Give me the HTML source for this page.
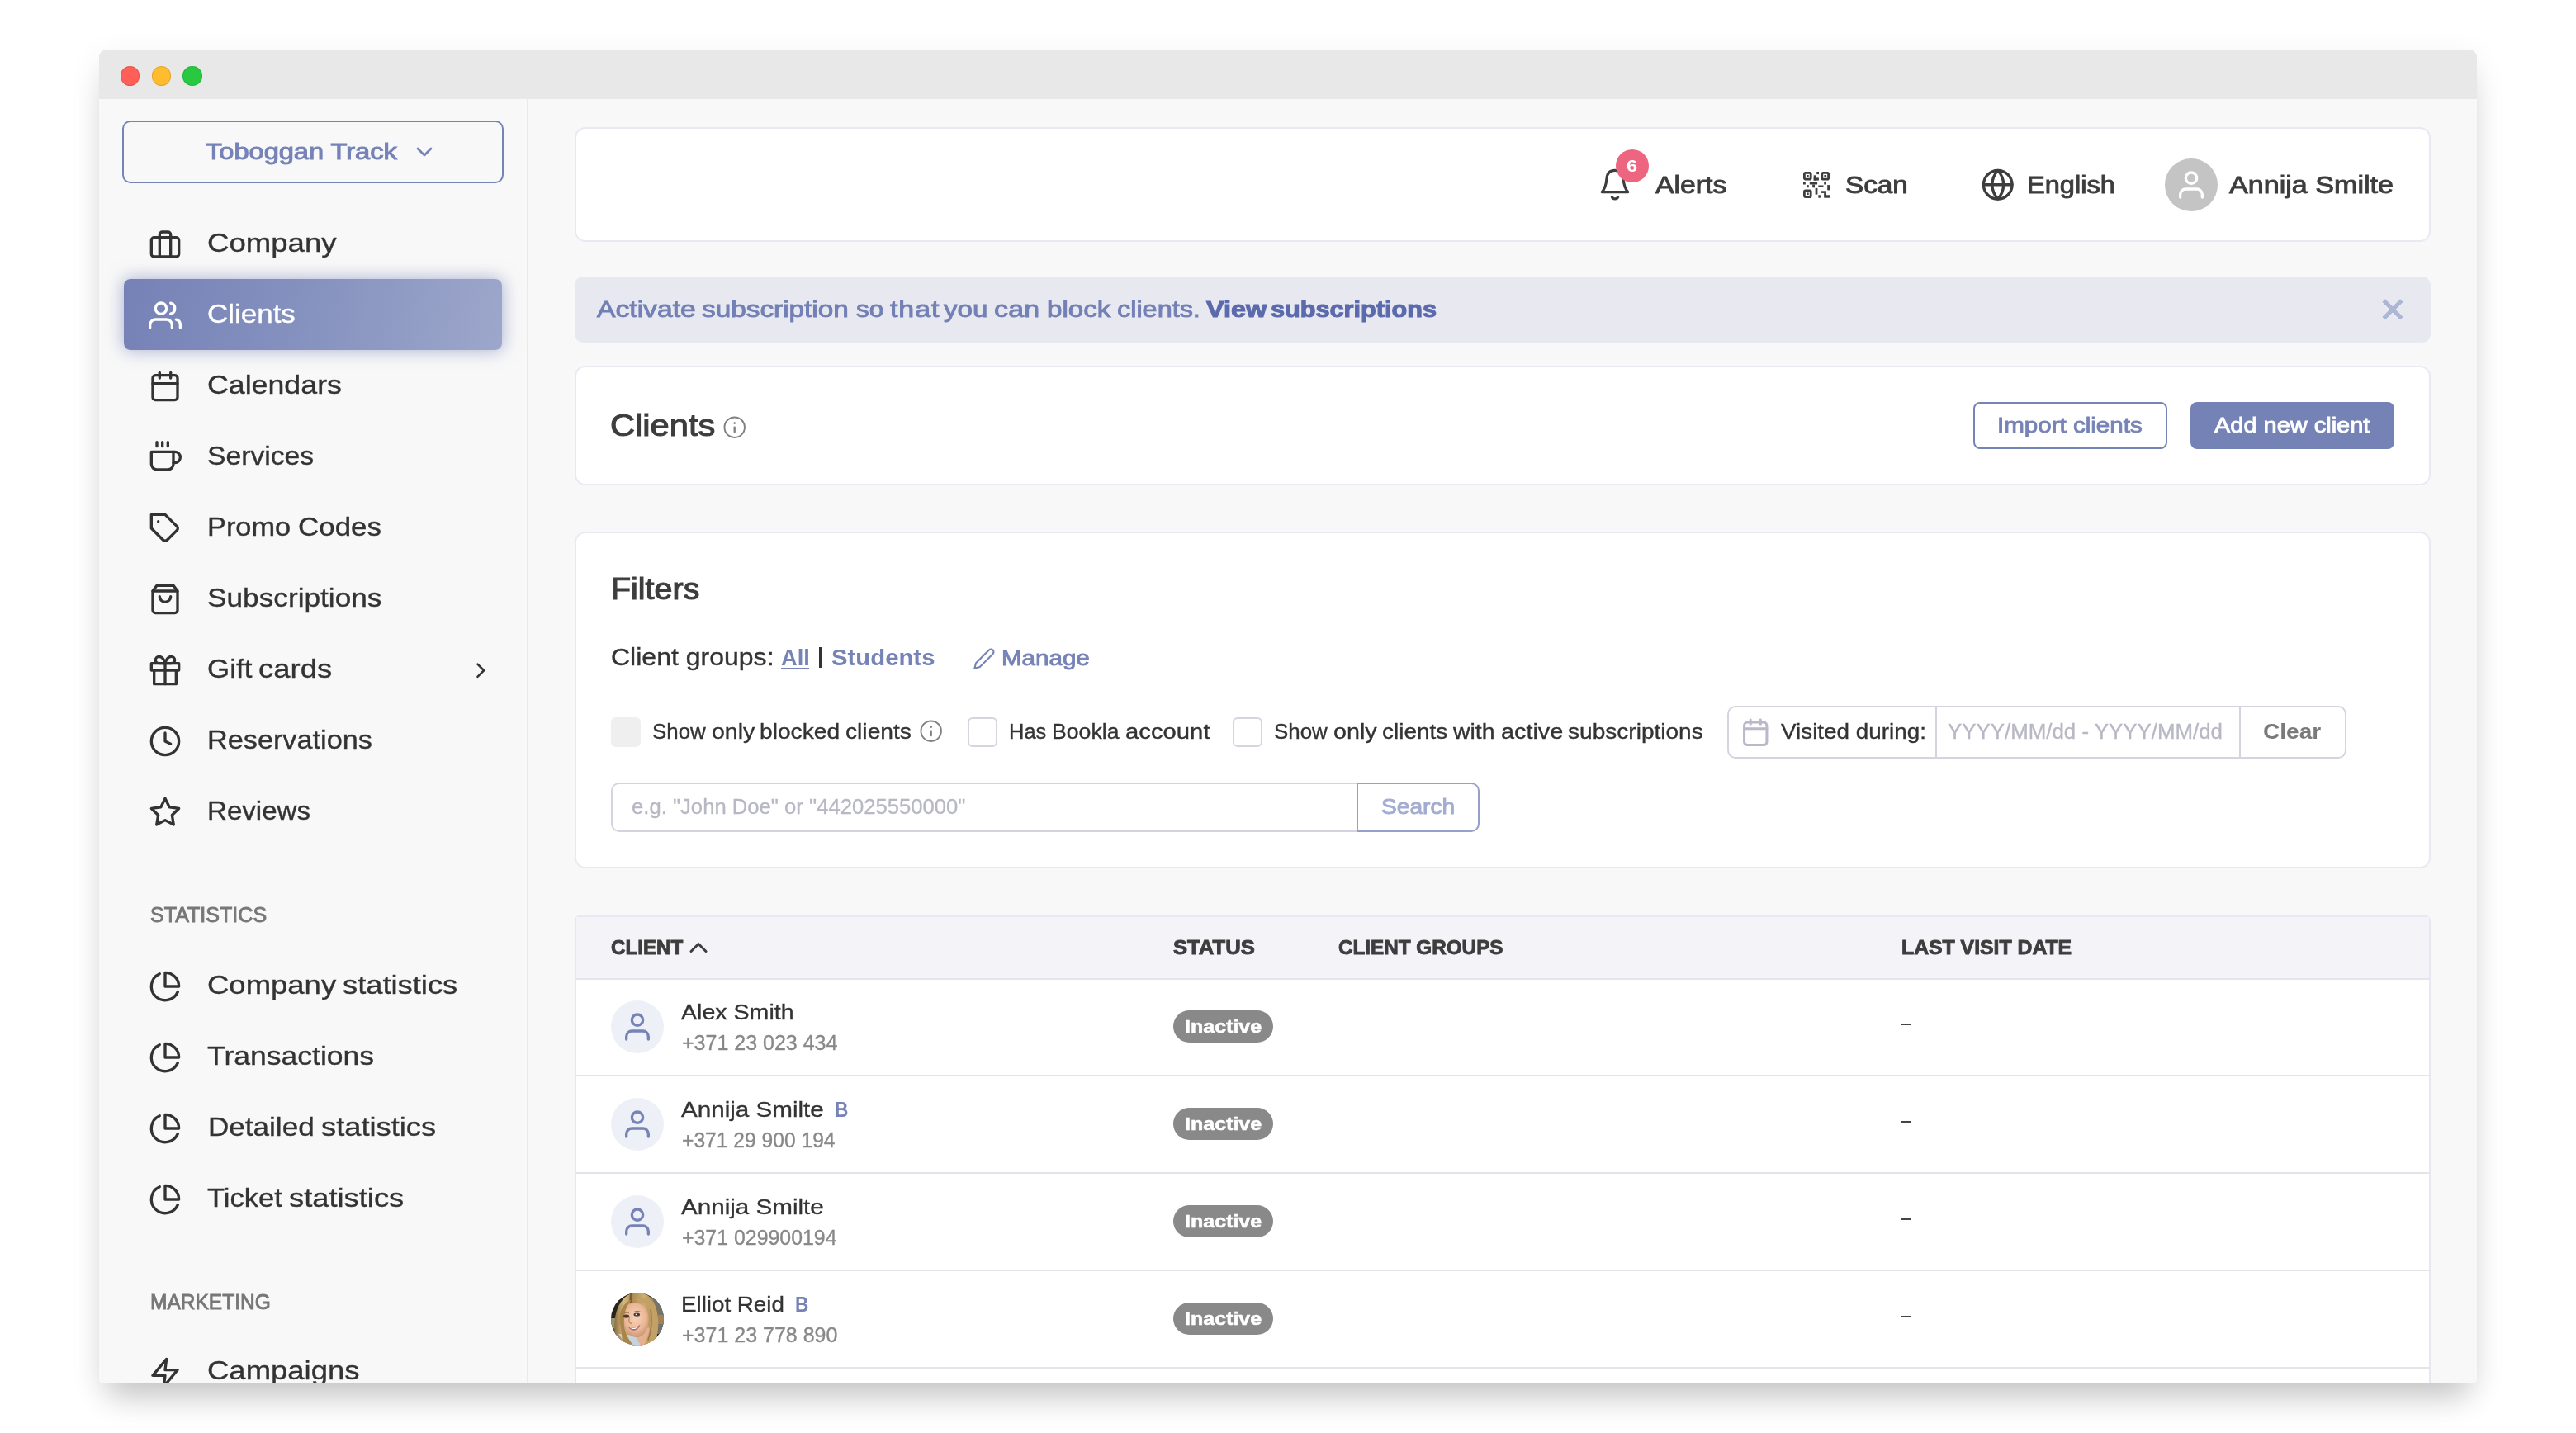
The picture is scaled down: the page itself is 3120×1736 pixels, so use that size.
<!DOCTYPE html>
<html lang="en">
<head>
<meta charset="utf-8">
<title>Clients</title>
<style>
*{box-sizing:border-box;margin:0;padding:0}
html,body{width:3120px;height:1736px;overflow:hidden;background:#fff}
body{font-family:"Liberation Sans",sans-serif;color:#333;position:relative}
svg{display:block;overflow:visible}
.ic{fill:none;stroke:currentColor;stroke-width:2;stroke-linecap:round;stroke-linejoin:round}
.abs{position:absolute}
.t{position:absolute;white-space:pre;line-height:1;transform-origin:0 0}
#shadow{position:absolute;left:120px;top:60px;width:2880px;height:1616px;border-radius:9px 9px 6px 6px;box-shadow:0 28px 36px -12px rgba(0,0,0,.19),0 10px 40px rgba(0,0,0,.07)}
#win{position:absolute;left:120px;top:60px;width:2880px;height:1616px;border-radius:9px 9px 6px 6px;background:#f8f8f8;overflow:hidden;will-change:transform}
</style>
</head>
<body>
<div id="shadow"></div>
<div id="win">
<div class="abs " style="left:0px;top:0px;width:2880px;height:60px;background:#e8e8e8"></div>
<div class="abs " style="left:25.8px;top:20.1px;width:23.6px;height:23.6px;background:#ff5f57;border-radius:50%;box-shadow:inset 0 0 0 1px rgba(0,0,0,.1)"></div>
<div class="abs " style="left:63.6px;top:20.1px;width:23.6px;height:23.6px;background:#febc2e;border-radius:50%;box-shadow:inset 0 0 0 1px rgba(0,0,0,.1)"></div>
<div class="abs " style="left:101.2px;top:20.1px;width:23.6px;height:23.6px;background:#28c840;border-radius:50%;box-shadow:inset 0 0 0 1px rgba(0,0,0,.1)"></div>
<div class="abs " style="left:518px;top:60px;width:2px;height:1556px;background:#e9e9f3"></div>
<div class="abs " style="left:28px;top:86px;width:462px;height:76px;border:2px solid #7683b7;border-radius:10px"></div>
<span class="t" style="left:129.4px;top:110.0px;font-size:27.5px;color:#7683b7;transform:scaleX(1.1844);-webkit-text-stroke:1.05px;">Toboggan Track</span>
<svg class="ic abs" viewBox="0 0 24 24" style="left:378px;top:108px;width:32px;height:32px;color:#7683b7;stroke-width:2;"><polyline points="6 9 12 15 18 9"/></svg>
<svg class="ic abs" viewBox="0 0 24 24" style="left:60px;top:216.1px;width:40px;height:40px;color:#333;stroke-width:2;"><rect x="2" y="7" width="20" height="14" rx="2" ry="2"/><path d="M16 21V5a2 2 0 0 0-2-2h-4a2 2 0 0 0-2 2v16"/></svg>
<span class="t" style="left:130.7px;top:217.6px;font-size:32px;color:#333;-webkit-text-stroke:.35px;transform:scaleX(1.1432);">Company</span>
<div class="abs " style="left:30px;top:278px;width:458px;height:86px;border-radius:8px;background:linear-gradient(100deg,#7682b6 0%,#8490be 45%,#9da7cb 100%);box-shadow:0 0 20px 1px rgba(105,120,180,.55)"></div>
<svg class="ic abs" viewBox="0 0 24 24" style="left:60px;top:302.1px;width:40px;height:40px;color:#fff;stroke-width:2;"><path d="M17 21v-2a4 4 0 0 0-4-4H5a4 4 0 0 0-4 4v2"/><circle cx="9" cy="7" r="4"/><path d="M23 21v-2a4 4 0 0 0-3-3.87"/><path d="M16 3.13a4 4 0 0 1 0 7.75"/></svg>
<span class="t" style="left:130.8px;top:303.6px;font-size:32px;color:#fff;-webkit-text-stroke:.35px;transform:scaleX(1.0924);">Clients</span>
<svg class="ic abs" viewBox="0 0 24 24" style="left:60px;top:388.1px;width:40px;height:40px;color:#333;stroke-width:2;"><rect x="3" y="4" width="18" height="18" rx="2" ry="2"/><line x1="16" y1="2" x2="16" y2="6"/><line x1="8" y1="2" x2="8" y2="6"/><line x1="3" y1="10" x2="21" y2="10"/></svg>
<span class="t" style="left:130.7px;top:389.6px;font-size:32px;color:#333;-webkit-text-stroke:.35px;transform:scaleX(1.1168);">Calendars</span>
<svg class="ic abs" viewBox="0 0 24 24" style="left:60px;top:474.1px;width:40px;height:40px;color:#333;stroke-width:2;"><path d="M18 8h1a4 4 0 0 1 0 8h-1"/><path d="M2 8h16v9a4 4 0 0 1-4 4H6a4 4 0 0 1-4-4V8z"/><line x1="6" y1="1" x2="6" y2="4"/><line x1="10" y1="1" x2="10" y2="4"/><line x1="14" y1="1" x2="14" y2="4"/></svg>
<span class="t" style="left:130.8px;top:475.6px;font-size:32px;color:#333;-webkit-text-stroke:.35px;transform:scaleX(1.0526);">Services</span>
<svg class="ic abs" viewBox="0 0 24 24" style="left:60px;top:560.1px;width:40px;height:40px;color:#333;stroke-width:2;"><path d="M20.59 13.41l-7.17 7.17a2 2 0 0 1-2.83 0L2 12V2h10l8.59 8.59a2 2 0 0 1 0 2.82z"/><line x1="7" y1="7" x2="7.01" y2="7"/></svg>
<span class="t" style="left:131.4px;top:561.6px;font-size:32px;color:#333;-webkit-text-stroke:.35px;transform:scaleX(1.0738);">Promo</span>
<span class="t" style="left:241.0px;top:561.6px;font-size:32px;color:#333;-webkit-text-stroke:.35px;transform:scaleX(1.0913);">Codes</span>
<svg class="ic abs" viewBox="0 0 24 24" style="left:60px;top:646.1px;width:40px;height:40px;color:#333;stroke-width:2;"><path d="M6 2L3 6v14a2 2 0 0 0 2 2h14a2 2 0 0 0 2-2V6l-3-4z"/><line x1="3" y1="6" x2="21" y2="6"/><path d="M16 10a4 4 0 0 1-8 0"/></svg>
<span class="t" style="left:130.8px;top:647.6px;font-size:32px;color:#333;-webkit-text-stroke:.35px;transform:scaleX(1.1008);">Subscriptions</span>
<svg class="ic abs" viewBox="0 0 24 24" style="left:60px;top:732.1px;width:40px;height:40px;color:#333;stroke-width:2;"><polyline points="20 12 20 22 4 22 4 12"/><rect x="2" y="7" width="20" height="5"/><line x1="12" y1="22" x2="12" y2="7"/><path d="M12 7H7.5a2.5 2.5 0 0 1 0-5C11 2 12 7 12 7z"/><path d="M12 7h4.5a2.5 2.5 0 0 0 0-5C13 2 12 7 12 7z"/></svg>
<span class="t" style="left:130.5px;top:733.6px;font-size:32px;color:#333;-webkit-text-stroke:.35px;transform:scaleX(1.0917);">Gift</span>
<span class="t" style="left:193.2px;top:733.6px;font-size:32px;color:#333;-webkit-text-stroke:.35px;transform:scaleX(1.1393);">cards</span>
<svg class="ic abs" viewBox="0 0 24 24" style="left:447.4px;top:736.6px;width:30.5px;height:30.5px;color:#333;stroke-width:2;"><polyline points="9 18 15 12 9 6"/></svg>
<svg class="ic abs" viewBox="0 0 24 24" style="left:60px;top:818.1px;width:40px;height:40px;color:#333;stroke-width:2;"><circle cx="12" cy="12" r="10"/><polyline points="12 6 12 12 16 14"/></svg>
<span class="t" style="left:130.8px;top:819.6px;font-size:32px;color:#333;-webkit-text-stroke:.35px;transform:scaleX(1.0704);">Reservations</span>
<svg class="ic abs" viewBox="0 0 24 24" style="left:60px;top:904.1px;width:40px;height:40px;color:#333;stroke-width:2;"><polygon points="12 2 15.09 8.26 22 9.27 17 14.14 18.18 21.02 12 17.77 5.82 21.02 7 14.14 2 9.27 8.91 8.26 12 2"/></svg>
<span class="t" style="left:130.8px;top:905.6px;font-size:32px;color:#333;-webkit-text-stroke:.35px;transform:scaleX(1.0339);">Reviews</span>
<svg class="ic abs" viewBox="0 0 24 24" style="left:60px;top:1115.1px;width:40px;height:40px;color:#333;stroke-width:2;"><path d="M21.21 15.89A10 10 0 1 1 8 2.83"/><path d="M22 12A10 10 0 0 0 12 2v10z"/></svg>
<span class="t" style="left:130.7px;top:1116.5px;font-size:32px;color:#333;-webkit-text-stroke:.35px;transform:scaleX(1.1402);">Company</span>
<span class="t" style="left:295.1px;top:1116.5px;font-size:32px;color:#333;-webkit-text-stroke:.35px;transform:scaleX(1.1349);">statistics</span>
<svg class="ic abs" viewBox="0 0 24 24" style="left:60px;top:1201.1px;width:40px;height:40px;color:#333;stroke-width:2;"><path d="M21.21 15.89A10 10 0 1 1 8 2.83"/><path d="M22 12A10 10 0 0 0 12 2v10z"/></svg>
<span class="t" style="left:130.8px;top:1202.5px;font-size:32px;color:#333;-webkit-text-stroke:.35px;transform:scaleX(1.1104);">Transactions</span>
<svg class="ic abs" viewBox="0 0 24 24" style="left:60px;top:1287.1px;width:40px;height:40px;color:#333;stroke-width:2;"><path d="M21.21 15.89A10 10 0 1 1 8 2.83"/><path d="M22 12A10 10 0 0 0 12 2v10z"/></svg>
<span class="t" style="left:131.7px;top:1288.5px;font-size:32px;color:#333;-webkit-text-stroke:.35px;transform:scaleX(1.0958);">Detailed</span>
<span class="t" style="left:269.4px;top:1288.5px;font-size:32px;color:#333;-webkit-text-stroke:.35px;transform:scaleX(1.1333);">statistics</span>
<svg class="ic abs" viewBox="0 0 24 24" style="left:60px;top:1373.1px;width:40px;height:40px;color:#333;stroke-width:2;"><path d="M21.21 15.89A10 10 0 1 1 8 2.83"/><path d="M22 12A10 10 0 0 0 12 2v10z"/></svg>
<span class="t" style="left:130.7px;top:1374.5px;font-size:32px;color:#333;-webkit-text-stroke:.35px;transform:scaleX(1.0792);">Ticket</span>
<span class="t" style="left:229.8px;top:1374.5px;font-size:32px;color:#333;-webkit-text-stroke:.35px;transform:scaleX(1.1349);">statistics</span>
<svg class="ic abs" viewBox="0 0 24 24" style="left:60px;top:1583.2px;width:40px;height:40px;color:#333;stroke-width:2;"><polygon points="13 2 3 14 12 14 11 22 21 10 12 10 13 2"/></svg>
<span class="t" style="left:130.7px;top:1584.4px;font-size:32px;color:#333;-webkit-text-stroke:.35px;transform:scaleX(1.1402);">Campaigns</span>
<span class="t" style="left:61.6px;top:1036.2px;font-size:25.3px;color:#777;transform:scaleX(0.9911);-webkit-text-stroke:.9px #777;">STATISTICS</span>
<span class="t" style="left:61.6px;top:1505.2px;font-size:25.3px;color:#777;transform:scaleX(0.9689);-webkit-text-stroke:.9px #777;">MARKETING</span>
<div class="abs " style="left:576px;top:94px;width:2248px;height:139px;background:#fff;border:2px solid #e9e9f3;border-radius:13px"></div>
<svg class="abs" viewBox="0 0 40 44" style="left:1816px;top:142px;width:40px;height:44px;fill:none;stroke:#3d3d3d;stroke-width:3.2;stroke-linecap:round;stroke-linejoin:round"><path d="M4.2 30.6 C9 26 9.5 19 10 14 C10.6 7.6 14.6 4.4 20 4.4 C25.4 4.4 29.4 7.6 30 14 C30.5 19 31 26 35.8 30.6 Z"/><path d="M16.4 36.6 C17.6 39.6 22.4 39.6 23.6 36.6"/></svg>
<div class="abs " style="left:1837px;top:121px;width:40px;height:40px;background:#ee6580;border-radius:50%"></div>
<span class="t" style="left:1850.3px;top:131.0px;font-size:20.5px;color:#fff;font-weight:bold;transform:scaleX(1.1533);">6</span>
<span class="t" style="left:1884.8px;top:148.8px;font-size:29.8px;color:#3d3d3d;transform:scaleX(1.1338);-webkit-text-stroke:.95px;">Alerts</span>
<svg class="abs" viewBox="0 0 32 32" style="left:2064px;top:148px;width:32px;height:32px;fill:#3d3d3d"><rect x="1.4" y="1.4" width="7.8" height="7.8" rx="1.4" fill="none" stroke="#3d3d3d" stroke-width="2.8"/><rect x="4" y="4" width="2.7" height="2.7"/><rect x="22.799999999999997" y="1.4" width="7.8" height="7.8" rx="1.4" fill="none" stroke="#3d3d3d" stroke-width="2.8"/><rect x="25.4" y="4" width="2.7" height="2.7"/><rect x="1.4" y="22.799999999999997" width="7.8" height="7.8" rx="1.4" fill="none" stroke="#3d3d3d" stroke-width="2.8"/><rect x="4" y="25.4" width="2.7" height="2.7"/><rect x="16.3" y="0" width="2.7" height="3.1"/><rect x="12.7" y="4.3" width="2.8" height="6.3"/><rect x="12.7" y="7.4" width="6.2" height="3.2"/><rect x="0" y="12.7" width="2.8" height="2.8"/><rect x="4" y="16.1" width="2.8" height="3.1"/><rect x="7.8" y="12.7" width="9.3" height="2.8"/><rect x="11.2" y="15.5" width="2.8" height="3.8"/><rect x="18.3" y="16.5" width="6.2" height="2.5"/><rect x="25.2" y="12.7" width="2.8" height="2.8"/><rect x="29.2" y="16.1" width="2.8" height="6.3"/><rect x="14.6" y="19.9" width="2.8" height="7.7"/><rect x="18.3" y="28.3" width="2.6" height="3.4"/><rect x="21.7" y="23.3" width="6.3" height="2.6"/><rect x="25.2" y="25.8" width="2.8" height="3.4"/><rect x="25.2" y="28.3" width="6.8" height="3.4"/></svg>
<span class="t" style="left:2114.8px;top:148.8px;font-size:29.8px;color:#3d3d3d;transform:scaleX(1.1134);-webkit-text-stroke:.95px;">Scan</span>
<svg class="ic abs" viewBox="0 0 24 24" style="left:2279.2px;top:143.2px;width:41.5px;height:41.5px;color:#3d3d3d;stroke-width:1.95;"><circle cx="12" cy="12" r="10"/><line x1="2" y1="12" x2="22" y2="12"/><path d="M12 2a15.3 15.3 0 0 1 4 10 15.3 15.3 0 0 1-4 10 15.3 15.3 0 0 1-4-10 15.3 15.3 0 0 1 4-10z"/></svg>
<span class="t" style="left:2334.9px;top:148.8px;font-size:29.8px;color:#3d3d3d;transform:scaleX(1.0925);-webkit-text-stroke:.95px;">English</span>
<div class="abs " style="left:2502px;top:132px;width:64px;height:64px;background:#c4c4c4;border-radius:50%"></div>
<svg class="ic abs" viewBox="0 0 24 24" style="left:2514px;top:144px;width:40px;height:40px;color:#fff;stroke-width:2;"><path d="M20 21v-2a4 4 0 0 0-4-4H8a4 4 0 0 0-4 4v2"/><circle cx="12" cy="7" r="4"/></svg>
<span class="t" style="left:2579.8px;top:148.8px;font-size:29.8px;color:#3d3d3d;transform:scaleX(1.1442);-webkit-text-stroke:.95px;">Annija Smilte</span>
<div class="abs " style="left:576px;top:275px;width:2248px;height:80px;background:#e8e9f0;border-radius:10px"></div>
<span class="t" style="left:603.4px;top:301.0px;font-size:27.8px;color:#7380b6;transform:scaleX(1.2110);-webkit-text-stroke:.9px;">Activate</span>
<span class="t" style="left:730.4px;top:301.0px;font-size:27.8px;color:#7380b6;transform:scaleX(1.1989);-webkit-text-stroke:.9px;">subscription</span>
<span class="t" style="left:916.6px;top:301.0px;font-size:27.8px;color:#7380b6;transform:scaleX(1.1308);-webkit-text-stroke:.9px;">so</span>
<span class="t" style="left:957.5px;top:301.0px;font-size:27.8px;color:#7380b6;letter-spacing:0.76px;transform:scaleX(1.2200);-webkit-text-stroke:.9px;">that</span>
<span class="t" style="left:1023.0px;top:301.0px;font-size:27.8px;color:#7380b6;transform:scaleX(1.1940);-webkit-text-stroke:.9px;">you</span>
<span class="t" style="left:1084.3px;top:301.0px;font-size:27.8px;color:#7380b6;letter-spacing:0.20px;transform:scaleX(1.2200);-webkit-text-stroke:.9px;">can</span>
<span class="t" style="left:1147.5px;top:301.0px;font-size:27.8px;color:#7380b6;transform:scaleX(1.1912);-webkit-text-stroke:.9px;">block</span>
<span class="t" style="left:1232.7px;top:301.0px;font-size:27.8px;color:#7380b6;transform:scaleX(1.1659);-webkit-text-stroke:.9px;">clients.</span>
<span class="t" style="left:1340.7px;top:301.0px;font-size:27.6px;color:#5b6aad;font-weight:bold;transform:scaleX(1.1710);-webkit-text-stroke:1.1px;">View</span>
<span class="t" style="left:1418.9px;top:301.0px;font-size:27.6px;color:#5b6aad;font-weight:bold;transform:scaleX(1.1106);-webkit-text-stroke:1.1px;">subscriptions</span>
<svg class="abs" viewBox="0 0 26 26" style="left:2765.2px;top:302.4px;width:26px;height:26px;stroke:#aeb6d5;stroke-width:5.2;filter:drop-shadow(0 1px 0 rgba(255,255,255,.8))"><path d="M2.1 2.1L23.9 23.9M23.9 2.1L2.1 23.9"/></svg>
<div class="abs " style="left:576px;top:383px;width:2248px;height:145px;background:#fff;border:2px solid #e9e9f3;border-radius:13px"></div>
<span class="t" style="left:619.4px;top:438.0px;font-size:36px;color:#3d3d3d;transform:scaleX(1.1569);-webkit-text-stroke:1.05px;">Clients</span>
<svg class="ic abs" viewBox="0 0 24 24" style="left:755.3px;top:443.3px;width:29.4px;height:29.4px;color:#808080;stroke-width:1.55;"><circle cx="12" cy="12" r="10"/><line x1="12" y1="16.5" x2="12" y2="11.9" stroke-width="1.9"/><line x1="12" y1="7.8" x2="12.01" y2="7.8" stroke-width="2.2"/></svg>
<div class="abs " style="left:2270px;top:427px;width:235px;height:57px;border:2px solid #7683b7;border-radius:8px;background:#fff"></div>
<span class="t" style="left:2299.4px;top:443.2px;font-size:25.2px;color:#7683b7;transform:scaleX(1.1728);-webkit-text-stroke:.85px;">Import clients</span>
<div class="abs " style="left:2533px;top:427px;width:247px;height:57px;background:#7582b6;border-radius:8px"></div>
<span class="t" style="left:2562.0px;top:443.2px;font-size:25.2px;color:#fff;transform:scaleX(1.1495);-webkit-text-stroke:.85px;">Add new client</span>
<div class="abs " style="left:576px;top:584px;width:2248px;height:408px;background:#fff;border:2px solid #e9e9f3;border-radius:13px"></div>
<span class="t" style="left:620.4px;top:635.6px;font-size:36px;color:#3d3d3d;transform:scaleX(1.0955);-webkit-text-stroke:1.05px;">Filters</span>
<span class="t" style="left:619.8px;top:722.2px;font-size:28.8px;color:#333;-webkit-text-stroke:.35px;transform:scaleX(1.1117);">Client groups:</span>
<span class="t" style="left:825.8px;top:723.2px;font-size:28px;color:#7683b7;font-weight:bold;transform:scaleX(0.9728);">All</span>
<div class="abs " style="left:826.2px;top:748.8px;width:33.8px;height:2.2px;background:#7683b7"></div>
<div class="abs " style="left:871.8px;top:723.5px;width:3px;height:25.5px;background:#333"></div>
<span class="t" style="left:886.6px;top:723.2px;font-size:28px;color:#7683b7;font-weight:bold;transform:scaleX(1.0473);">Students</span>
<svg class="ic abs" viewBox="0 0 24 24" style="left:1057.5px;top:723.5px;width:28px;height:28px;color:#7683b7;stroke-width:1.8;"><path d="M17 3a2.828 2.828 0 1 1 4 4L7.5 20.5 2 22l1.5-5.5L17 3z"/></svg>
<span class="t" style="left:1092.5px;top:725.2px;font-size:25.4px;color:#7683b7;transform:scaleX(1.1635);-webkit-text-stroke:.85px;">Manage</span>
<div class="abs " style="left:620px;top:809px;width:36px;height:36px;background:#efefef;border-radius:6px"></div>
<span class="t" style="left:670.0px;top:812.6px;font-size:26.2px;color:#333;-webkit-text-stroke:.35px;transform:scaleX(0.9893);">Show</span>
<span class="t" style="left:741.9px;top:812.6px;font-size:26.2px;color:#333;-webkit-text-stroke:.35px;transform:scaleX(1.0884);">only</span>
<span class="t" style="left:800.3px;top:812.6px;font-size:26.2px;color:#333;-webkit-text-stroke:.35px;transform:scaleX(1.0754);">blocked</span>
<span class="t" style="left:904.4px;top:812.6px;font-size:26.2px;color:#333;-webkit-text-stroke:.35px;transform:scaleX(1.0773);">clients</span>
<svg class="ic abs" viewBox="0 0 24 24" style="left:993.3px;top:810.6px;width:29.4px;height:29.4px;color:#808080;stroke-width:1.55;"><circle cx="12" cy="12" r="10"/><line x1="12" y1="16.5" x2="12" y2="11.9" stroke-width="1.9"/><line x1="12" y1="7.8" x2="12.01" y2="7.8" stroke-width="2.2"/></svg>
<div class="abs " style="left:1052px;top:809px;width:36px;height:36px;background:#fff;border:2px solid #d5d5e1;border-radius:6px"></div>
<span class="t" style="left:1102.0px;top:812.6px;font-size:26.2px;color:#333;-webkit-text-stroke:.35px;transform:scaleX(0.9722);">Has</span>
<span class="t" style="left:1154.2px;top:812.6px;font-size:26.2px;color:#333;-webkit-text-stroke:.35px;transform:scaleX(1.0173);">Bookla</span>
<span class="t" style="left:1242.7px;top:812.6px;font-size:26.2px;color:#333;-webkit-text-stroke:.35px;transform:scaleX(1.1179);">account</span>
<div class="abs " style="left:1373px;top:809px;width:36px;height:36px;background:#fff;border:2px solid #d5d5e1;border-radius:6px"></div>
<span class="t" style="left:1423.0px;top:812.6px;font-size:26.2px;color:#333;-webkit-text-stroke:.35px;transform:scaleX(0.9893);">Show</span>
<span class="t" style="left:1495.0px;top:812.6px;font-size:26.2px;color:#333;-webkit-text-stroke:.35px;transform:scaleX(1.0949);">only</span>
<span class="t" style="left:1553.7px;top:812.6px;font-size:26.2px;color:#333;-webkit-text-stroke:.35px;transform:scaleX(1.0677);">clients</span>
<span class="t" style="left:1639.6px;top:812.6px;font-size:26.2px;color:#333;-webkit-text-stroke:.35px;transform:scaleX(1.0862);">with</span>
<span class="t" style="left:1697.6px;top:812.6px;font-size:26.2px;color:#333;-webkit-text-stroke:.35px;transform:scaleX(1.1008);">active</span>
<span class="t" style="left:1779.4px;top:812.6px;font-size:26.2px;color:#333;-webkit-text-stroke:.35px;transform:scaleX(1.0715);">subscriptions</span>
<div class="abs " style="left:1972px;top:795px;width:750px;height:64px;background:#fff;border:2px solid #d4d4e0;border-radius:10px"></div>
<div class="abs " style="left:2224px;top:797px;width:2px;height:60px;background:#d4d4e0"></div>
<div class="abs " style="left:2592px;top:797px;width:2px;height:60px;background:#d4d4e0"></div>
<svg class="ic abs" viewBox="0 0 24 24" style="left:1987.5px;top:809px;width:36.5px;height:36.5px;color:#b9b9c7;stroke-width:1.97;"><rect x="3" y="4" width="18" height="18" rx="2.5" ry="2.5"/><line x1="16" y1="2" x2="16" y2="5.5"/><line x1="8" y1="2" x2="8" y2="5.5"/><line x1="3" y1="9" x2="21" y2="9"/></svg>
<span class="t" style="left:2036.6px;top:812.8px;font-size:26.2px;color:#333;-webkit-text-stroke:.35px;transform:scaleX(1.0632);">Visited during:</span>
<span class="t" style="left:2238.8px;top:812.8px;font-size:26.2px;color:#b8b8c5;-webkit-text-stroke:.35px;transform:scaleX(0.9874);">YYYY/MM/dd - YYYY/MM/dd</span>
<span class="t" style="left:2620.7px;top:812.8px;font-size:26.2px;color:#7a7a7a;font-weight:bold;transform:scaleX(1.0725);">Clear</span>
<div class="abs " style="left:620px;top:888px;width:905px;height:59.5px;background:#fff;border:2px solid #d4d4e0;border-radius:10px 0 0 10px"></div>
<div class="abs " style="left:1523px;top:888px;width:149px;height:59.5px;background:#fff;border:2px solid #96a0c8;border-radius:0 10px 10px 0"></div>
<span class="t" style="left:645.4px;top:904.2px;font-size:26.2px;color:#b8b8c5;-webkit-text-stroke:.35px;transform:scaleX(0.9797);">e.g. "John Doe" or "442025550000"</span>
<span class="t" style="left:1552.9px;top:904.9px;font-size:25.2px;color:#a3acd0;transform:scaleX(1.1173);-webkit-text-stroke:.85px;">Search</span>
<div class="abs " style="left:576px;top:1048px;width:2248px;height:600px;background:#fff;border:2px solid #e7e7f1;border-top:3px solid #e9e9f3;border-radius:8px 8px 0 0"></div>
<div class="abs " style="left:578px;top:1051px;width:2244px;height:73.5px;background:#f3f3f8"></div>
<div class="abs " style="left:578px;top:1124.5px;width:2244px;height:2px;background:#e4e4ee"></div>
<span class="t" style="left:619.9px;top:1075.9px;font-size:23.8px;color:#3d3d3d;font-weight:bold;transform:scaleX(1.0158);-webkit-text-stroke:.9px;">CLIENT</span>
<svg class="ic abs" viewBox="0 0 24 24" style="left:708.1px;top:1070.4px;width:36px;height:36px;color:#3d3d3d;stroke-width:2;"><polyline points="18 15 12 9 6 15"/></svg>
<span class="t" style="left:1300.6px;top:1075.9px;font-size:23.8px;color:#3d3d3d;font-weight:bold;transform:scaleX(1.0779);-webkit-text-stroke:.9px;">STATUS</span>
<span class="t" style="left:1501.0px;top:1075.9px;font-size:23.8px;color:#3d3d3d;font-weight:bold;transform:scaleX(1.0195);-webkit-text-stroke:.9px;">CLIENT GROUPS</span>
<span class="t" style="left:2182.5px;top:1075.9px;font-size:23.8px;color:#3d3d3d;font-weight:bold;transform:scaleX(1.0417);-webkit-text-stroke:.9px;">LAST VISIT DATE</span>
<div class="abs " style="left:620px;top:1152px;width:64px;height:64px;background:#eef0f7;border-radius:50%"></div>
<svg class="ic abs" viewBox="0 0 24 24" style="left:632px;top:1164px;width:40px;height:40px;color:#7683b7;stroke-width:2;"><path d="M20 21v-2a4 4 0 0 0-4-4H8a4 4 0 0 0-4 4v2"/><circle cx="12" cy="7" r="4"/></svg>
<span class="t" style="left:704.7px;top:1153.0px;font-size:26.6px;color:#333;-webkit-text-stroke:.35px;transform:scaleX(1.0747);">Alex Smith</span>
<span class="t" style="left:706.0px;top:1191.0px;font-size:25px;color:#888;-webkit-text-stroke:.35px;">+371 23 023 434</span>
<div class="abs " style="left:1301px;top:1164px;width:121px;height:39px;background:#898989;border-radius:20px"></div>
<span class="t" style="left:1315.0px;top:1172.0px;font-size:22.9px;color:#fff;font-weight:bold;transform:scaleX(1.0927);-webkit-text-stroke:.6px;">Inactive</span>
<div class="abs " style="left:2183.4px;top:1179.5px;width:12px;height:2.5px;background:#444"></div>
<div class="abs " style="left:578px;top:1242px;width:2244px;height:2px;background:#e3e3ea"></div>
<div class="abs " style="left:620px;top:1270px;width:64px;height:64px;background:#eef0f7;border-radius:50%"></div>
<svg class="ic abs" viewBox="0 0 24 24" style="left:632px;top:1282px;width:40px;height:40px;color:#7683b7;stroke-width:2;"><path d="M20 21v-2a4 4 0 0 0-4-4H8a4 4 0 0 0-4 4v2"/><circle cx="12" cy="7" r="4"/></svg>
<span class="t" style="left:704.7px;top:1271.0px;font-size:26.6px;color:#333;-webkit-text-stroke:.35px;transform:scaleX(1.1132);">Annija Smilte</span>
<span class="t" style="left:891.2px;top:1272.0px;font-size:25.5px;color:#7683b7;font-weight:bold;transform:scaleX(0.8896);">B</span>
<span class="t" style="left:706.0px;top:1309.0px;font-size:25px;color:#888;-webkit-text-stroke:.35px;transform:scaleX(0.9848);">+371 29 900 194</span>
<div class="abs " style="left:1301px;top:1282px;width:121px;height:39px;background:#898989;border-radius:20px"></div>
<span class="t" style="left:1315.0px;top:1290.0px;font-size:22.9px;color:#fff;font-weight:bold;transform:scaleX(1.0927);-webkit-text-stroke:.6px;">Inactive</span>
<div class="abs " style="left:2183.4px;top:1297.5px;width:12px;height:2.5px;background:#444"></div>
<div class="abs " style="left:578px;top:1360px;width:2244px;height:2px;background:#e3e3ea"></div>
<div class="abs " style="left:620px;top:1388px;width:64px;height:64px;background:#eef0f7;border-radius:50%"></div>
<svg class="ic abs" viewBox="0 0 24 24" style="left:632px;top:1400px;width:40px;height:40px;color:#7683b7;stroke-width:2;"><path d="M20 21v-2a4 4 0 0 0-4-4H8a4 4 0 0 0-4 4v2"/><circle cx="12" cy="7" r="4"/></svg>
<span class="t" style="left:704.7px;top:1389.0px;font-size:26.6px;color:#333;-webkit-text-stroke:.35px;transform:scaleX(1.1132);">Annija Smilte</span>
<span class="t" style="left:706.0px;top:1427.0px;font-size:25px;color:#888;-webkit-text-stroke:.35px;transform:scaleX(0.9954);">+371 029900194</span>
<div class="abs " style="left:1301px;top:1400px;width:121px;height:39px;background:#898989;border-radius:20px"></div>
<span class="t" style="left:1315.0px;top:1408.0px;font-size:22.9px;color:#fff;font-weight:bold;transform:scaleX(1.0927);-webkit-text-stroke:.6px;">Inactive</span>
<div class="abs " style="left:2183.4px;top:1415.5px;width:12px;height:2.5px;background:#444"></div>
<div class="abs " style="left:578px;top:1478px;width:2244px;height:2px;background:#e3e3ea"></div>
<svg class="abs" viewBox="0 0 64 64" style="left:620px;top:1506px;width:64px;height:64px"><defs><clipPath id="cp"><circle cx="32" cy="32" r="32"/></clipPath>
<linearGradient id="hair" x1="0" x2="1" y1="0" y2="0"><stop offset="0" stop-color="#8f6f42"/><stop offset=".22" stop-color="#d6b981"/><stop offset=".42" stop-color="#b08c52"/><stop offset=".68" stop-color="#cdae72"/><stop offset=".86" stop-color="#b39058"/><stop offset="1" stop-color="#7d6038"/></linearGradient>
<radialGradient id="skin" cx=".5" cy=".42" r=".62"><stop offset="0" stop-color="#f6d2b8"/><stop offset=".6" stop-color="#ebb999"/><stop offset="1" stop-color="#c98e6c"/></radialGradient></defs>
<g clip-path="url(#cp)"><rect width="64" height="64" fill="#25251c"/><rect x="49" y="6" width="15" height="44" fill="#74756a"/><rect x="57" y="27" width="7" height="11" fill="#a38355"/><rect x="0" y="31" width="13" height="12" fill="#97946e"/><rect x="0" y="43" width="12" height="8" fill="#5c5a40"/>
<path d="M5 52 C1 22 13 0 32 0 C49 0 58 14 57 36 C56 52 51 60 46 64 L12 64 C8 60 6 56 5 52Z" fill="url(#hair)"/>
<path d="M25 1 C23 6 24 11 26 15" stroke="#6a4f2c" stroke-width="3" fill="none" opacity=".8"/>
<path d="M9 50 L20 64 L38 64 L30 52Z" fill="#c6d3dd"/>
<path d="M28 50 L36 64 L52 64 L46 42Z" fill="#e4b08e"/>
<path d="M13.5 31 C13 18 21 11.5 30 12.5 C41 13.5 46.5 22 45.5 35 C44.5 47 38 55 30 54 C21 53 14 43 13.5 31Z" fill="url(#skin)"/>
<path d="M12 42 C8 28 12 13 25 9 C17 17 15 28 16 40 C17 50 22 57 27 64 L15 64 C13 56 13 48 12 42Z" fill="#a98549"/>
<path d="M29 9 C40 9 48 18 48 32 C48 45 44 55 40 64 L53 62 C59 46 59 23 51 11 C45 5 36 5 29 9Z" fill="#c3a066"/>
<path d="M48 20 C50 32 49 46 45 58" stroke="#8a6a3c" stroke-width="1.6" fill="none" opacity=".7"/>
<ellipse cx="18.6" cy="28.6" rx="3.6" ry="2.2" fill="#4a3a30"/><ellipse cx="31.3" cy="26.6" rx="3.8" ry="2.2" fill="#4a3a30"/><circle cx="30.5" cy="26.4" r=".9" fill="#e8e8e8"/>
<path d="M15.5 25.5 C17.5 24 20 24 22 25M27.5 23.5 C30 22 33.5 22 36 23.5" stroke="#9a7448" stroke-width="1" fill="none"/>
<path d="M20.5 41 C25 44 31 43 35.5 38.5 C33 47.5 24 48 20.5 41Z" fill="#b5646a"/><path d="M22.5 42 C26 43.6 30.5 43 33.6 40.4 C30.5 44.8 26 45.2 22.5 42Z" fill="#fff"/>
<path d="M22.5 30 C21 34 21.5 37 25 37.5" stroke="#c48c6a" stroke-width="1.4" fill="none"/>
</g></svg>
<span class="t" style="left:704.7px;top:1507.0px;font-size:26.6px;color:#333;-webkit-text-stroke:.35px;transform:scaleX(1.0427);">Elliot Reid</span>
<span class="t" style="left:843.4px;top:1508.0px;font-size:25.5px;color:#7683b7;font-weight:bold;transform:scaleX(0.8896);">B</span>
<span class="t" style="left:706.0px;top:1545.0px;font-size:25px;color:#888;-webkit-text-stroke:.35px;">+371 23 778 890</span>
<div class="abs " style="left:1301px;top:1518px;width:121px;height:39px;background:#898989;border-radius:20px"></div>
<span class="t" style="left:1315.0px;top:1526.0px;font-size:22.9px;color:#fff;font-weight:bold;transform:scaleX(1.0927);-webkit-text-stroke:.6px;">Inactive</span>
<div class="abs " style="left:2183.4px;top:1533.5px;width:12px;height:2.5px;background:#444"></div>
<div class="abs " style="left:578px;top:1596px;width:2244px;height:2px;background:#e3e3ea"></div>
</div>
</body>
</html>
